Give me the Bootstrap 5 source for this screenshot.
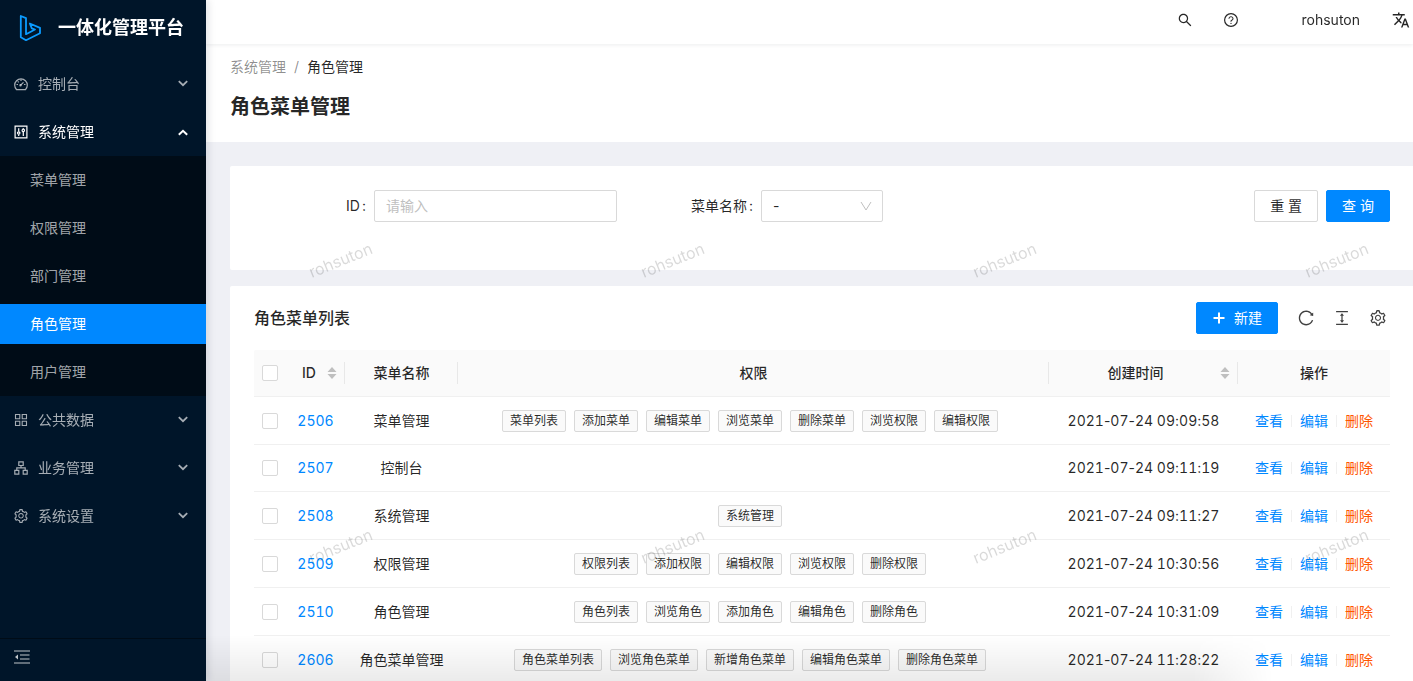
<!DOCTYPE html>
<html lang="zh-CN">
<head>
<meta charset="utf-8">
<meta name="viewport" content="width=device-width, initial-scale=1">
<title>角色菜单管理 - 一体化管理平台</title>
<link href="https://cdn.jsdelivr.net/npm/bootstrap@5.3.0/dist/css/bootstrap.min.css" rel="stylesheet">
<style>
:root { --brand: #0088ff; --ink: rgba(0,0,0,.85); --line: #d9d9d9; }
body { font-family: Inter, "Noto Sans CJK SC", sans-serif; font-size: 14px; line-height: 22px; color: var(--ink); }
a { text-decoration: none; }
svg { display: block; flex: none; fill: currentColor; }
.ln { fill: none; stroke: currentColor; }

/* sidebar */
.sider { width: 206px; background: #001529; z-index: 3; box-shadow: 2px 0 8px rgba(0,21,41,.12); }
.brand-row { height: 56px; padding: 0 18px; gap: 16px; color: #fff; font-size: 18px; font-weight: 600; }
.brand-row:hover { color: #fff; }
.menu-list { margin-top: 4px; }
.menu-list a, .menu-list button { height: 40px; margin: 4px 0; color: rgba(255,255,255,.65); }
.menu-list button { width: 100%; padding: 0 18px 0 14px; gap: 10px; border: 0; background: none; }
.menu-list button.open { color: #fff; }
.menu-list .arrow { margin-left: auto; }
.menu-list .wide-icon { margin: 0 -1px; }
.sub-list { background: #000c17; }
.sub-list a { padding-left: 30px; }
.menu-list .sub-list a.active { background: var(--brand); color: #fff; }
.fold { height: 43px; padding: 0 14px 6px; border: 0; border-top: 1px solid #000c17; background: none; color: rgba(255,255,255,.75); }

/* header */
.topbar { height: 44px; padding-right: 3px; box-shadow: 0 1px 4px rgba(0,21,41,.08); z-index: 2; }
.topbar button { border: 0; background: none; padding: 0; color: inherit; }
.topbar .help { margin: 0 62px 0 29px; }
.topbar .user-name { margin-right: 32px; }
.page-head { height: 98px; padding: 12px 24px 0; }
.page-head .breadcrumb { --bs-breadcrumb-item-padding-x: 8px; --bs-breadcrumb-divider-color: rgba(0,0,0,.45); margin: 0 0 13px; }
.page-head .breadcrumb a { color: rgba(0,0,0,.45); }
.page-head .breadcrumb .active { color: var(--ink); }
.page-head h1 { font-size: 20px; line-height: 32px; font-weight: 600; margin: 0; }
.viewport-main { background: #eff0f5; overflow: auto; scrollbar-width: none; }
.viewport-main::-webkit-scrollbar { display: none; }
.content-area { padding: 24px 0 24px 24px; }

/* query form */
.panel { background: #fff; border-radius: 2px 0 0 2px; padding: 24px 23px 24px 24px; }
.query { height: 104px; margin-bottom: 16px; }
.query .form-control, .query .form-select { height: 32px; border-radius: 2px; border-color: var(--line); font-size: 14px; line-height: 22px; padding: 4px 11px; color: var(--ink); }
.query .form-control { padding: 3px 11px 5px; }
.query .form-control::placeholder { color: #bfbfbf; }
.query label::after { content: ":"; margin: 0 8px 0 2px; }
.query .form-select { background-size: 12px; background-position: right 10px center;
  background-image: url("data:image/svg+xml,%3Csvg xmlns='http://www.w3.org/2000/svg' viewBox='0 0 12 12'%3E%3Cpath d='M1 2 6 10l5-8' fill='none' stroke='%23bfbfbf'/%3E%3C/svg%3E"); }
.field-id { width: 363px; }
.field-id .form-control { width: 243px; }
.field-name { width: 266px; }
.field-name .form-select { width: 122px; }
.act { height: 32px; border-radius: 2px; font-size: 14px; line-height: 22px; padding: 4px 15px; }
.act-plain { border-color: var(--line); color: var(--ink); background: #fff; }
.act-main { background: var(--brand); border-color: var(--brand); color: #fff; }
.act-main:hover { background: #2b9bff; color: #fff; }

/* list */
.list-panel { padding-top: 16px; }
.list-panel h2 { font-size: 16px; line-height: 24px; font-weight: 500; margin: 0; }
.tools { gap: 19px; padding-right: 3px; }
.tools .tool-btn { border: 0; background: none; padding: 0; color: rgba(0,0,0,.75); }
.grid { table-layout: fixed; width: 100%; margin-top: 16px; text-align: center; }
.grid th { background: #fafafa; font-weight: 500; position: relative; }
.grid th, .grid td { padding: 12px 8px; border-bottom: 1px solid #f0f0f0; white-space: nowrap; }
.grid th.sep::after { content: ""; position: absolute; right: 0; top: 12px; bottom: 12px; width: 1px; background: #e8e8e8; }
.grid th:first-child { border-top-left-radius: 2px; }
.grid a { color: var(--brand); }
.grid a.del { color: #ff5500; }
.grid .form-check-input { display: block; width: 16px; height: 16px; margin: 0; border-radius: 2px; border-color: var(--line); }
.c-check { width: 32px; } .c-id { width: 59px; } .c-name { width: 113px; } .c-time { width: 189px; } .c-ops { width: 152px; }
.digits { font-feature-settings: "tnum"; }
.digits span { font-feature-settings: normal; }
.grid td.perms { padding: 0 11px 0 4px; }
.perm-box { display: flex; justify-content: center; gap: 8px; padding: 13px 0 12px; }
.perm { padding: 0 7px; border: 1px solid var(--line); border-radius: 2px; background: #fafafa; font-size: 12px; line-height: 20px; }
.ops i { width: 1px; height: 12px; background: #f0f0f0; }
.sort { color: #bfbfbf; }
.time-label { margin-right: 6px; }

/* overlays */
.marks { position: absolute; inset: 117px 0 0 0; overflow: hidden; pointer-events: none; z-index: 4; display: grid; grid-auto-rows: 286px; grid-template-columns: repeat(4, 332px); }
.marks span { width: 268px; text-align: center; align-self: center; color: rgba(0,0,0,.15); font-size: 16px; }
.marks b { display: inline-block; font-weight: 400; transform: rotate(-22deg); }
.fade-edge { position: absolute; left: 0; right: 140px; bottom: 0; height: 46px; pointer-events: none; z-index: 5; background: linear-gradient(transparent, rgba(0,0,0,.08)); -webkit-mask-image: linear-gradient(to left, transparent, #000 80px); mask-image: linear-gradient(to left, transparent, #000 80px); }
</style>
</head>
<body>
<svg width="0" height="0" class="position-absolute" aria-hidden="true">
  <symbol id="gear" viewBox="0 0 1024 1024"><path d="M924.8 625.7l-65.500-56c3.100-19 4.700-38.400 4.700-57.800s-1.600-38.800-4.700-57.800l65.500-56a32.030 32.030 0 009.300-35.200l-.9-2.600a443.740 443.740 0 00-79.700-137.900l-1.800-2.100a32.120 32.120 0 00-35.100-9.500l-81.300 28.900c-30-24.600-63.500-44-99.700-57.600l-15.700-85a32.050 32.050 0 00-25.800-25.700l-2.700-.5c-52.100-9.400-106.900-9.400-159 0l-2.700.5a32.050 32.050 0 00-25.800 25.700l-15.800 85.400a351.860 351.860 0 00-99 57.400l-81.900-29.100a32 32 0 00-35.100 9.500l-1.800 2.100a446.020 446.020 0 00-79.700 137.900l-.9 2.600c-4.500 12.500-.8 26.500 9.300 35.200l66.300 56.600c-3.100 18.800-4.600 38-4.600 57.100 0 19.200 1.500 38.400 4.600 57.100L99 625.500a32.030 32.030 0 00-9.300 35.200l.9 2.600c18.100 50.400 44.900 96.900 79.700 137.900l1.800 2.100a32.120 32.120 0 0035.100 9.500l81.900-29.100c29.800 24.500 63.100 43.900 99 57.400l15.800 85.400a32.050 32.050 0 0025.800 25.700l2.700.5a449.400 449.400 0 00159 0l2.700-.5a32.050 32.050 0 0025.800-25.700l15.700-85a350 350 0 0099.700-57.600l81.300 28.900a32 32 0 0035.100-9.500l1.800-2.100c34.800-41.100 61.600-87.500 79.700-137.900l.9-2.600c4.500-12.300.8-26.300-9.300-35zM788.300 465.900c2.500 15.100 3.800 30.600 3.800 46.100s-1.300 31-3.800 46.100l-6.600 40.100 74.700 63.900a370.030 370.030 0 01-42.600 73.600L721 702.800l-31.400 25.800c-23.900 19.600-50.500 35-79.300 45.800l-38.100 14.300-17.900 97a377.500 377.500 0 01-85 0l-17.900-97.200-37.800-14.500c-28.500-10.800-55-26.200-78.700-45.700l-31.400-25.900-93.400 33.200c-17-22.900-31.200-47.600-42.600-73.600l75.500-64.500-6.500-40c-2.400-14.900-3.700-30.300-3.700-45.500 0-15.300 1.200-30.600 3.700-45.500l6.500-40-75.500-64.500c11.300-26.100 25.600-50.700 42.600-73.600l93.400 33.200 31.400-25.900c23.700-19.500 50.200-34.900 78.700-45.700l37.900-14.300 17.900-97.200c28.100-3.200 56.800-3.200 85 0l17.900 97 38.100 14.300c28.700 10.800 55.400 26.200 79.300 45.800l31.400 25.800 92.800-32.900c17 22.900 31.200 47.600 42.600 73.600L781.800 426l6.500 39.900zM512 326c-97.200 0-176 78.800-176 176s78.800 176 176 176 176-78.800 176-176-78.800-176-176-176zm79.200 255.200A111.600 111.600 0 01512 614c-29.900 0-58-11.700-79.200-32.800A111.600 111.600 0 01400 502c0-29.900 11.700-58 32.800-79.200C454 401.600 482.100 390 512 390c29.900 0 58 11.600 79.200 32.800A111.600 111.600 0 01624 502c0 29.900-11.700 58-32.800 79.200z"/></symbol>
  <symbol id="down" viewBox="0 0 10 12"><path d="M.8 3.200 5 7.200l4.200-4" fill="none" stroke="currentColor" stroke-width="1.800"/></symbol>
  <symbol id="up" viewBox="0 0 10 12"><path d="M.8 8.800 5 4.800l4.200 4" fill="none" stroke="currentColor" stroke-width="2"/></symbol>
  <symbol id="sorter" viewBox="0 0 10 14"><path d="M5 1l4.500 5h-9zM5 13l4.500-5h-9z"/></symbol>
</svg>

<div class="d-flex vh-100 overflow-hidden">
  <aside class="sider d-flex flex-column flex-shrink-0">
    <a href="#" class="brand-row d-flex align-items-center">
      <svg width="24" height="28" viewBox="0 0 24 28" class="ln" style="color:#0a9bff" stroke-width="1.800" stroke-linejoin="round"><path d="M2.800 2 8 4.200V20.200l9-4.700-3.200-1.200L11.800 9.500 22 13.800V19.200L8 26.200l-5.200-3z"/></svg>
      <span>一体化管理平台</span>
    </a>
    <nav class="menu-list d-flex flex-column flex-grow-1">
      <button type="button" class="d-flex align-items-center"><svg width="14" height="14" viewBox="0 0 14 14" class="ln" stroke-width="1.200"><path d="M2.600 12.700A6.300 6.300 0 1 1 11.400 12.700z"/><path d="M6.600 8.200 9.500 5.300M7 2.500V4M2.500 7.500H4M10 7.500h1.500M3.700 4.300l1 1"/><circle cx="6.500" cy="8.300" r=".6"/></svg><span>控制台</span><svg class="arrow" width="10" height="12"><use href="#down"/></svg></button>
      <button type="button" class="d-flex align-items-center open" aria-expanded="true"><svg width="14" height="14" viewBox="0 0 14 14" class="ln" stroke-width="1.200"><path d="M1.100 1.100h11.800v11.800H1.100zM4.700 3.200v3.300M4.700 9.500v1.500M9.300 3.200v.8M9.300 7v4"/><circle cx="4.700" cy="8" r="1.200"/><circle cx="9.300" cy="5.400" r="1.200"/></svg><span>系统管理</span><svg class="arrow" width="10" height="12"><use href="#up"/></svg></button>
      <div class="sub-list d-flex flex-column">
        <a href="#" class="d-flex align-items-center">菜单管理</a>
        <a href="#" class="d-flex align-items-center">权限管理</a>
        <a href="#" class="d-flex align-items-center">部门管理</a>
        <a href="#" class="d-flex align-items-center active" aria-current="page">角色管理</a>
        <a href="#" class="d-flex align-items-center">用户管理</a>
      </div>
      <button type="button" class="d-flex align-items-center"><svg width="14" height="14" viewBox="0 0 14 14" class="ln" stroke-width="1.100"><path d="M1.500 1.500h4.300v4.300H1.500zM8.200 1.500h4.300v4.300H8.200zM1.500 8.200h4.300v4.300H1.500zM8.200 8.200h4.300v4.300H8.200z"/></svg><span>公共数据</span><svg class="arrow" width="10" height="12"><use href="#down"/></svg></button>
      <button type="button" class="d-flex align-items-center"><svg width="14" height="14" viewBox="0 0 14 14" class="ln" stroke-width="1.200"><path d="M4.800.8h4.400v3.700H4.800zM.8 9.300h4v3.900h-4zM9.200 9.300h4v3.900h-4zM7 4.500v2.400M2.800 9.300V6.900h8.400v2.400"/></svg><span>业务管理</span><svg class="arrow" width="10" height="12"><use href="#down"/></svg></button>
      <button type="button" class="d-flex align-items-center"><svg class="wide-icon" width="16" height="16"><use href="#gear"/></svg><span>系统设置</span><svg class="arrow" width="10" height="12"><use href="#down"/></svg></button>
    </nav>
    <button type="button" class="fold d-flex align-items-center" aria-label="收起菜单"><svg width="16" height="14" viewBox="0 0 16 14" class="ln" stroke-width="1.200"><path d="M0 1h16M6 5h9.500M6 9h9.500M0 13h16"/><path d="M4 4.500v5L1 7z" fill="currentColor" stroke="none"/></svg></button>
  </aside>

  <div class="flex-grow-1 d-flex flex-column position-relative overflow-hidden">
    <header class="topbar bg-white d-flex align-items-center justify-content-end flex-shrink-0 position-relative pb-1">
      <button type="button" aria-label="搜索"><svg width="16" height="16" viewBox="0 0 1024 1024"><path d="M909.600 854.500L649.900 594.800C690.200 542.700 712 479 712 412c0-80.200-31.300-155.400-87.900-212.100-56.600-56.700-132-87.900-212.100-87.900s-155.500 31.300-212.100 87.900C143.200 256.500 112 331.800 112 412c0 80.100 31.300 155.500 87.900 212.100C256.500 680.800 331.800 712 412 712c67 0 130.600-21.800 182.700-62l259.700 259.600a8.200 8.200 0 0011.600 0l43.600-43.500a8.200 8.200 0 000-11.600zM570.400 570.400C528 612.700 471.800 636 412 636s-116-23.300-158.400-65.600C211.300 528 188 471.800 188 412s23.300-116.100 65.600-158.400C296 211.300 352.200 188 412 188s116.100 23.200 158.400 65.600S636 352.200 636 412s-23.300 116.100-65.600 158.400z"/></svg></button>
      <button type="button" aria-label="帮助" class="help"><svg width="18" height="18" viewBox="0 0 1152 1152"><g transform="translate(64 64)"><circle cx="512" cy="512" r="410" class="ln" stroke-width="76"/><path d="M623.600 316.700C593.600 290.400 554 276 512 276s-81.600 14.500-111.600 40.700C369.200 344 352 380.700 352 420v7.600c0 4.400 3.600 8 8 8h48c4.400 0 8-3.600 8-8V420c0-44.100 43.100-80 96-80s96 35.900 96 80c0 31.100-22 59.600-56.100 72.700-21.200 8.100-39.200 22.300-52.100 40.900-13.100 19-19.900 41.800-19.900 64.900V620c0 4.400 3.600 8 8 8h48c4.400 0 8-3.600 8-8v-22.700a48.300 48.300 0 0130.900-44.800c59-22.700 97.100-74.700 97.100-132.500.1-39.300-17.100-76-48.300-103.300zM472 732a40 40 0 1080 0 40 40 0 10-80 0z"/></g></svg></button>
      <button type="button" class="user-name">rohsuton</button>
      <button type="button" aria-label="语言"><svg width="18" height="18" viewBox="0 0 24 24"><path d="M12.870 15.070l-2.540-2.510.03-.03c1.740-1.940 2.980-4.170 3.710-6.530H17V4h-7V2H8v2H1v1.990h11.170C11.500 7.920 10.440 9.750 9 11.350 8.070 10.320 7.300 9.190 6.690 8h-2c.73 1.630 1.730 3.170 2.980 4.560l-5.090 5.020L4 19l5-5 3.110 3.110.76-2.040zM18.500 10h-2L12 22h2l1.120-3h4.750L21 22h2l-4.500-12zm-2.620 7l1.620-4.330L19.120 17h-3.240z"/></svg></button>
    </header>

    <main class="viewport-main flex-grow-1">
      <div class="page-head bg-white">
        <nav aria-label="breadcrumb"><ol class="breadcrumb">
          <li class="breadcrumb-item"><a href="#">系统管理</a></li>
          <li class="breadcrumb-item active" aria-current="page">角色管理</li>
        </ol></nav>
        <h1>角色菜单管理</h1>
      </div>

      <div class="content-area">
        <form class="panel query d-flex align-items-start">
          <div class="field-id d-flex align-items-center justify-content-end"><label for="qid">ID</label><input id="qid" class="form-control" type="text" placeholder="请输入"></div>
          <div class="field-name d-flex align-items-center justify-content-end"><label for="qname">菜单名称</label><select id="qname" class="form-select"><option>-</option></select></div>
          <div class="ms-auto d-flex gap-2">
            <button type="reset" class="btn act act-plain">重 置</button>
            <button type="button" class="btn act act-main">查 询</button>
          </div>
        </form>

        <section class="panel list-panel">
          <div class="d-flex align-items-center justify-content-between">
            <h2>角色菜单列表</h2>
            <div class="tools d-flex align-items-center">
              <button type="button" class="btn act act-main d-flex align-items-center gap-2"><svg width="14" height="14" viewBox="0 0 14 14" class="ln" stroke-width="2"><path d="M7 1.500v11M1.500 7h11"/></svg>新建</button>
              <button type="button" class="tool-btn" aria-label="刷新"><svg width="18" height="18" viewBox="0 0 1024 1024"><path d="M909.100 209.300l-56.400 44.100C775.800 155.100 656.200 92 521.900 92 290 92 102.300 279.500 102 511.500 101.700 743.700 289.800 932 521.900 932c181.300 0 335.800-115 394.600-276.100 1.500-4.200-.7-8.900-4.900-10.300l-56.700-19.500a8 8 0 00-10.100 4.800c-1.800 5-3.800 10-5.900 14.900-17.300 41-42.100 77.800-73.700 109.400A344.770 344.770 0 01655.900 829c-42.300 17.900-87.400 27-133.800 27-46.500 0-91.500-9.100-133.800-27A341.500 341.500 0 01279 755.200a342.160 342.160 0 01-73.700-109.400c-17.900-42.400-27-87.400-27-133.900s9.100-91.500 27-133.900c17.300-41 42.100-77.800 73.700-109.400 31.600-31.600 68.400-56.400 109.300-73.800 42.300-17.900 87.400-27 133.800-27 46.500 0 91.500 9.100 133.800 27a341.500 341.500 0 01109.300 73.800c9.900 9.900 19.200 20.400 27.800 31.400l-60.200 47a8 8 0 003 14.100l175.600 43c5 1.200 9.900-2.600 9.900-7.700l.8-180.900c-.1-6.600-7.800-10.300-13-6.200z"/></svg></button>
              <button type="button" class="tool-btn" aria-label="密度"><svg width="16" height="18" viewBox="64 0 896 1024"><path d="M840 836H184c-4.400 0-8 3.600-8 8v60c0 4.400 3.600 8 8 8h656c4.400 0 8-3.600 8-8v-60c0-4.400-3.600-8-8-8zm0-724H184c-4.400 0-8 3.600-8 8v60c0 4.400 3.600 8 8 8h656c4.400 0 8-3.600 8-8v-60c0-4.400-3.600-8-8-8zM610.800 378c6 0 9.400-7 5.700-11.700L515.700 238.700a7.140 7.140 0 00-11.300 0L403.600 366.300a7.230 7.230 0 005.700 11.700H476v268h-62.800c-6 0-9.400 7-5.700 11.700l100.800 127.500c2.900 3.700 8.500 3.700 11.300 0l100.800-127.500c3.700-4.700.4-11.700-5.700-11.700H548V378h62.800z"/></svg></button>
              <button type="button" class="tool-btn" aria-label="列设置"><svg width="18" height="18"><use href="#gear"/></svg></button>
            </div>
          </div>

          <table class="grid">
            <colgroup><col class="c-check"><col class="c-id"><col class="c-name"><col><col class="c-time"><col class="c-ops"></colgroup>
            <thead><tr>
              <th><input class="form-check-input" type="checkbox" aria-label="全选"></th>
              <th class="sep"><span class="d-flex align-items-center justify-content-between"><span class="ps-2">ID</span><svg class="sort" width="10" height="14"><use href="#sorter"/></svg></span></th>
              <th class="sep">菜单名称</th>
              <th class="sep">权限</th>
              <th class="sep"><span class="d-flex align-items-center"><span class="time-label flex-grow-1">创建时间</span><svg class="sort" width="10" height="14"><use href="#sorter"/></svg></span></th>
              <th>操作</th>
            </tr></thead>
            <tbody id="rows"></tbody>
          </table>
        </section>
      </div>
    </main>

    <div class="marks" aria-hidden="true">
      <span><b>rohsuton</b></span><span><b>rohsuton</b></span><span><b>rohsuton</b></span><span><b>rohsuton</b></span>
      <span><b>rohsuton</b></span><span><b>rohsuton</b></span><span><b>rohsuton</b></span><span><b>rohsuton</b></span>
    </div>
    <div class="fade-edge"></div>
  </div>
</div>

<script src="https://cdn.jsdelivr.net/npm/bootstrap@5.3.0/dist/js/bootstrap.bundle.min.js"></script>
<script>
const roles = [
  [2506, '菜单管理', '2021-07-24 09:09:58', ['菜单列表', '添加菜单', '编辑菜单', '浏览菜单', '删除菜单', '浏览权限', '编辑权限']],
  [2507, '控制台', '2021-07-24 09:11:19', []],
  [2508, '系统管理', '2021-07-24 09:11:27', ['系统管理']],
  [2509, '权限管理', '2021-07-24 10:30:56', ['权限列表', '添加权限', '编辑权限', '浏览权限', '删除权限']],
  [2510, '角色管理', '2021-07-24 10:31:09', ['角色列表', '浏览角色', '添加角色', '编辑角色', '删除角色']],
  [2606, '角色菜单管理', '2021-07-24 11:28:22', ['角色菜单列表', '浏览角色菜单', '新增角色菜单', '编辑角色菜单', '删除角色菜单']]
];
// Digits are tabular so that times line up; separators keep their own narrow widths.
const tabular = t => t.replace(/[-:]/g, '<span>$&</span>');
document.getElementById('rows').innerHTML = roles.map(([id, name, time, perms]) => `
  <tr>
    <td><input class="form-check-input" type="checkbox" aria-label="选择 ${id}"></td>
    <td class="digits"><a href="#">${id}</a></td>
    <td>${name}</td>
    <td class="perms">${perms.length ? `<div class="perm-box">${perms.map(p => `<span class="perm">${p}</span>`).join('')}</div>` : ''}</td>
    <td class="digits">${tabular(time)}</td>
    <td><div class="ops d-flex align-items-center justify-content-center gap-2"><a href="#">查看</a><i></i><a href="#">编辑</a><i></i><a href="#" class="del">删除</a></div></td>
  </tr>`).join('');
</script>
</body>
</html>
